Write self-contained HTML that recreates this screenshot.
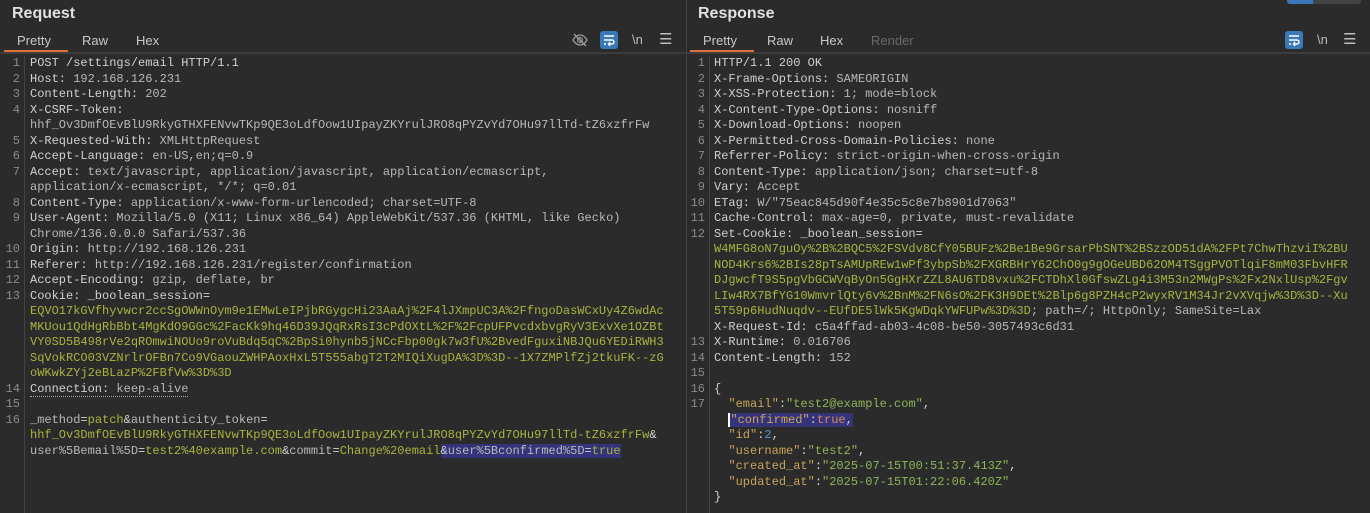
<!DOCTYPE html>
<html><head><meta charset="utf-8">
<style>
*{margin:0;padding:0;box-sizing:border-box}
body{width:1370px;height:513px;background:#2b2b2b;overflow:hidden;font-family:"Liberation Sans",sans-serif;color:#d0d0d0;position:relative}
.panel{position:absolute;top:0;height:513px}
.title{position:absolute;top:5px;left:12px;font-size:16px;font-weight:bold;color:#e0e0e0}
.tabs{position:absolute;top:32px;left:0;height:20px;font-size:13px;color:#c8c8c8}
.tab{position:absolute;top:1px}
.uline{position:absolute;top:18px;height:2px;background:#e0703a}
.sep{position:absolute;top:52px;left:0;right:0;height:2px;background:#3c3c3c}
.code{position:absolute;top:56px;font-family:"Liberation Mono",monospace;font-size:12px;line-height:15.5px;white-space:pre;color:#d0d0d0}
.gut{position:absolute;top:56px;width:20px;font-family:"Liberation Mono",monospace;font-size:12px;line-height:15.5px;white-space:pre;text-align:right;color:#8a8a8a}
.gl{position:absolute;top:56px;bottom:0;width:1px;background:#444}
.v{color:#b8b8b8}
.g{color:#a9b43e}
.k{color:#c9a45a}
.s{color:#8fb35a}
.o{color:#d08a55}
.n{color:#5a9bd0}
.hl{background:#35347a}
.ic{position:absolute;top:32px;font-size:13px;color:#bdbdbd}
.btn{position:absolute;top:31px;width:18px;height:18px;background:#3a78b8;border-radius:3px}
</style></head><body>

<!-- Request panel -->
<div class="panel" style="left:0;width:686px">
 <div class="title">Request</div>
 <div class="tabs"><span class="tab" style="left:17px">Pretty</span><span class="tab" style="left:82px">Raw</span><span class="tab" style="left:136px">Hex</span><div class="uline" style="left:4px;width:64px"></div></div>
 <svg style="position:absolute;left:572px;top:32px" width="16" height="16" viewBox="0 0 16 16"><path d="M1 8c2-3.5 4.5-5 7-5s5 1.5 7 5c-2 3.5-4.5 5-7 5S3 11.5 1 8z" fill="none" stroke="#9a9a9a" stroke-width="1.3"/><circle cx="8" cy="8" r="2.3" fill="none" stroke="#9a9a9a" stroke-width="1.3"/><path d="M2 2l12 12" stroke="#9a9a9a" stroke-width="1.4"/></svg>
 <div class="btn" style="left:600px"><svg width="18" height="18" viewBox="0 0 18 18"><path d="M4 5h10M4 9h8a2 2 0 010 4H9M10 11l-1.5 2L10 15M4 13h2" fill="none" stroke="#fff" stroke-width="1.4"/></svg></div>
 <div class="ic" style="left:632px">\n</div>
 <div class="ic" style="left:659px;font-size:15px;top:30px">☰</div>
 <div class="sep"></div>
 <div class="gl" style="left:24px"></div>
 <div class="gut" style="left:0">1
2
3
4

5
6
7

8
9

10
11
12
13





14
15
16</div>
 <div class="code" style="left:30px">POST /settings/email HTTP/1.1
Host: <span class="v">192.168.126.231</span>
Content-Length: <span class="v">202</span>
X-CSRF-Token: 
<span class="v">hhf_Ov3DmfOEvBlU9RkyGTHXFENvwTKp9QE3oLdfOow1UIpayZKYrulJRO8qPYZvYd7OHu97llTd-tZ6xzfrFw</span>
X-Requested-With: <span class="v">XMLHttpRequest</span>
Accept-Language: <span class="v">en-US,en;q=0.9</span>
Accept: <span class="v">text/javascript, application/javascript, application/ecmascript,</span>
<span class="v">application/x-ecmascript, */*; q=0.01</span>
Content-Type: <span class="v">application/x-www-form-urlencoded; charset=UTF-8</span>
User-Agent: <span class="v">Mozilla/5.0 (X11; Linux x86_64) AppleWebKit/537.36 (KHTML, like Gecko)</span>
<span class="v">Chrome/136.0.0.0 Safari/537.36</span>
Origin: <span class="v">http://192.168.126.231</span>
Referer: <span class="v">http://192.168.126.231/register/confirmation</span>
Accept-Encoding: <span class="v">gzip, deflate, br</span>
Cookie: _boolean_session=
<span class="g">EQVO17kGVfhyvwcr2ccSgOWWnOym9e1EMwLeIPjbRGygcHi23AaAj%2F4lJXmpUC3A%2FfngoDasWCxUy4Z6wdAc</span>
<span class="g">MKUou1QdHgRbBbt4MgKdO9GGc%2FacKk9hq46D39JQqRxRsI3cPdOXtL%2F%2FcpUFPvcdxbvgRyV3ExvXe1OZBt</span>
<span class="g">VY0SD5B498rVe2qROmwiNOUo9roVuBdq5qC%2BpSi0hynb5jNCcFbp00gk7w3fU%2BvedFguxiNBJQu6YEDiRWH3</span>
<span class="g">SqVokRCO03VZNrlrOFBn7Co9VGaouZWHPAoxHxL5T555abgT2T2MIQiXugDA%3D%3D--1X7ZMPlfZj2tkuFK--zG</span>
<span class="g">oWKwkZYj2eBLazP%2FBfVw%3D%3D</span>
<span style="border-bottom:1px dotted #aaa">Connection: <span class="v">keep-alive</span></span>

<span class="v">_method</span>=<span class="g">patch</span>&amp;<span class="v">authenticity_token</span>=
<span class="g">hhf_Ov3DmfOEvBlU9RkyGTHXFENvwTKp9QE3oLdfOow1UIpayZKYrulJRO8qPYZvYd7OHu97llTd-tZ6xzfrFw</span>&amp;
<span class="v">user%5Bemail%5D</span>=<span class="g">test2%40example.com</span>&amp;<span class="v">commit</span>=<span class="g">Change%20email</span><span class="hl">&amp;<span class="v">user%5Bconfirmed%5D</span>=<span class="g">true</span></span></div>
</div>

<div style="position:absolute;left:686px;top:0;width:1px;height:513px;background:#444"></div>

<!-- Response panel -->
<div class="panel" style="left:687px;width:683px">
 <div class="title" style="left:11px">Response</div>
 <div class="tabs"><span class="tab" style="left:16px">Pretty</span><span class="tab" style="left:80px">Raw</span><span class="tab" style="left:133px">Hex</span><span class="tab" style="left:184px;color:#6a6a6a">Render</span><div class="uline" style="left:3px;width:64px"></div></div>
 <div class="btn" style="left:598px"><svg width="18" height="18" viewBox="0 0 18 18"><path d="M4 5h10M4 9h8a2 2 0 010 4H9M10 11l-1.5 2L10 15M4 13h2" fill="none" stroke="#fff" stroke-width="1.4"/></svg></div>
 <div class="ic" style="left:630px">\n</div>
 <div class="ic" style="left:656px;font-size:15px;top:30px">☰</div>
 <div style="position:absolute;left:600px;top:0;width:26px;height:4px;background:#3a78b8;border-radius:0 0 0 3px"></div>
 <div style="position:absolute;left:626px;top:0;width:48px;height:4px;background:#444;border-radius:0 0 3px 0"></div>
 <div class="sep"></div>
 <div class="gl" style="left:22px"></div>
 <div class="gut" style="left:-2px">1
2
3
4
5
6
7
8
9
10
11
12






13
14
15
16
17</div>
 <div class="code" style="left:27px">HTTP/1.1 200 OK
X-Frame-Options: <span class="v">SAMEORIGIN</span>
X-XSS-Protection: <span class="v">1; mode=block</span>
X-Content-Type-Options: <span class="v">nosniff</span>
X-Download-Options: <span class="v">noopen</span>
X-Permitted-Cross-Domain-Policies: <span class="v">none</span>
Referrer-Policy: <span class="v">strict-origin-when-cross-origin</span>
Content-Type: <span class="v">application/json; charset=utf-8</span>
Vary: <span class="v">Accept</span>
ETag: <span class="v">W/"75eac845d90f4e35c5c8e7b8901d7063"</span>
Cache-Control: <span class="v">max-age=0, private, must-revalidate</span>
Set-Cookie: _boolean_session=
<span class="g">W4MFG8oN7guOy%2B%2BQC5%2FSVdv8CfY05BUFz%2Be1Be9GrsarPbSNT%2BSzzOD51dA%2FPt7ChwThzviI%2BU</span>
<span class="g">NOD4Krs6%2BIs28pTsAMUpREw1wPf3ybpSb%2FXGRBHrY62ChO0g9gOGeUBD62OM4TSggPVOTlqiF8mM03FbvHFR</span>
<span class="g">DJgwcfT9S5pgVbGCWVqByOn5GgHXrZZL8AU6TD8vxu%2FCTDhXl0GfswZLg4i3M53n2MWgPs%2Fx2NxlUsp%2Fgv</span>
<span class="g">LIw4RX7BfYG10WmvrlQty6v%2BnM%2FN6sO%2FK3H9DEt%2Blp6g8PZH4cP2wyxRV1M34Jr2vXVqjw%3D%3D--Xu</span>
<span class="g">5T59p6HudNuqdv--EUfDE5lWk5KgWDqkYWFUPw%3D%3D</span><span class="v">; path=/; HttpOnly; SameSite=Lax</span>
X-Request-Id: <span class="v">c5a4ffad-ab03-4c08-be50-3057493c6d31</span>
X-Runtime: <span class="v">0.016706</span>
Content-Length: <span class="v">152</span>

{
  <span class="k">"email"</span>:<span class="s">"test2@example.com"</span>,
  <span class="hl" style="border-left:2px solid #fff"><span class="k">"confirmed"</span>:<span class="o">true</span>,</span>
  <span class="k">"id"</span>:<span class="n">2</span>,
  <span class="k">"username"</span>:<span class="s">"test2"</span>,
  <span class="k">"created_at"</span>:<span class="s">"2025-07-15T00:51:37.413Z"</span>,
  <span class="k">"updated_at"</span>:<span class="s">"2025-07-15T01:22:06.420Z"</span>
}</div>
</div>
</body></html>
